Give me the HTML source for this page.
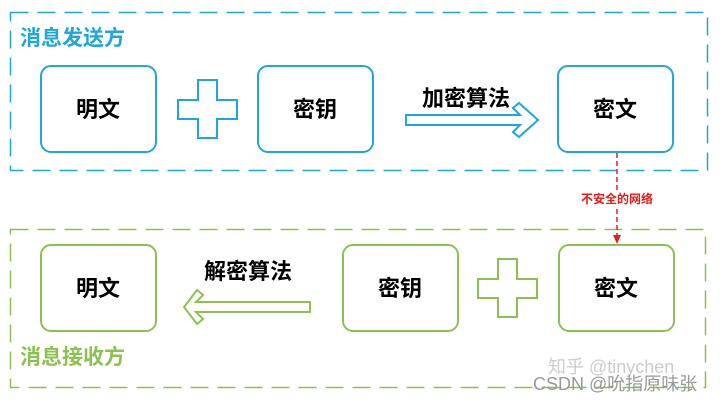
<!DOCTYPE html>
<html><head><meta charset="utf-8"><style>
body{margin:0;background:#fff;width:720px;height:401px;overflow:hidden}
svg{display:block}
text{font-family:"Liberation Sans","Noto Sans CJK SC",sans-serif;font-weight:bold}
</style></head><body>
<svg width="720" height="401" viewBox="0 0 720 401">
<rect x="10.5" y="12.5" width="697" height="158" fill="none" stroke="#1fa6dc" stroke-width="1.5" stroke-dasharray="18,9"/>
<rect x="10.5" y="229.5" width="695" height="158" fill="none" stroke="#8cc152" stroke-width="1.5" stroke-dasharray="18,9"/>
<text x="20" y="45" font-size="21" fill="#1fa6dc">消息发送方</text>
<text x="20" y="364" font-size="21" fill="#8cc152">消息接收方</text>
<g fill="none" stroke="#1fa6dc" stroke-width="2">
<rect x="41" y="66" width="115" height="86" rx="10"/>
<rect x="258" y="66" width="115" height="86" rx="10"/>
<rect x="558" y="66" width="115" height="86" rx="10"/>
<path d="M198 80h19v20h20v19h-20v19h-19v-19h-20v-19h20z"/>
<path d="M406 115h114l-7-7 6-5 19 17-19 17-6-5 7-7h-114z"/>
</g>
<g fill="none" stroke="#8cc152" stroke-width="2">
<rect x="41" y="245" width="115" height="86" rx="10"/>
<rect x="343" y="245" width="115" height="86" rx="10"/>
<rect x="559" y="245" width="115" height="86" rx="10"/>
<path d="M498 259h19v20h20v19h-20v19h-19v-19h-20v-19h20z"/>
<path d="M310 302h-114l7-7-6-5-13 17 13 17 6-5-7-7h114z"/>
</g>
<g font-size="22" fill="#000" text-anchor="middle">
<text x="98" y="117">明文</text>
<text x="315" y="117">密钥</text>
<text x="615" y="117">密文</text>
<text x="98" y="296">明文</text>
<text x="400" y="296">密钥</text>
<text x="616" y="296">密文</text>
<text x="466" y="106">加密算法</text>
<text x="248" y="279">解密算法</text>
</g>
<line x1="617" y1="153" x2="617" y2="236" stroke="#e02020" stroke-width="1.5" stroke-dasharray="5,3"/>
<path d="M613 235h8l-4 9z" fill="#e02020"/>
<rect x="572" y="190" width="90" height="16" fill="#fff"/>
<text x="617" y="203" font-size="12" fill="#e02020" text-anchor="middle">不安全的网络</text>
<text x="548" y="373" font-size="18" fill="#ccc" style="font-weight:normal">知乎 @tinychen</text>
<text x="533" y="390" font-size="18" fill="#999" style="font-weight:normal">CSDN @吮指原味张</text>
</svg>
</body></html>
